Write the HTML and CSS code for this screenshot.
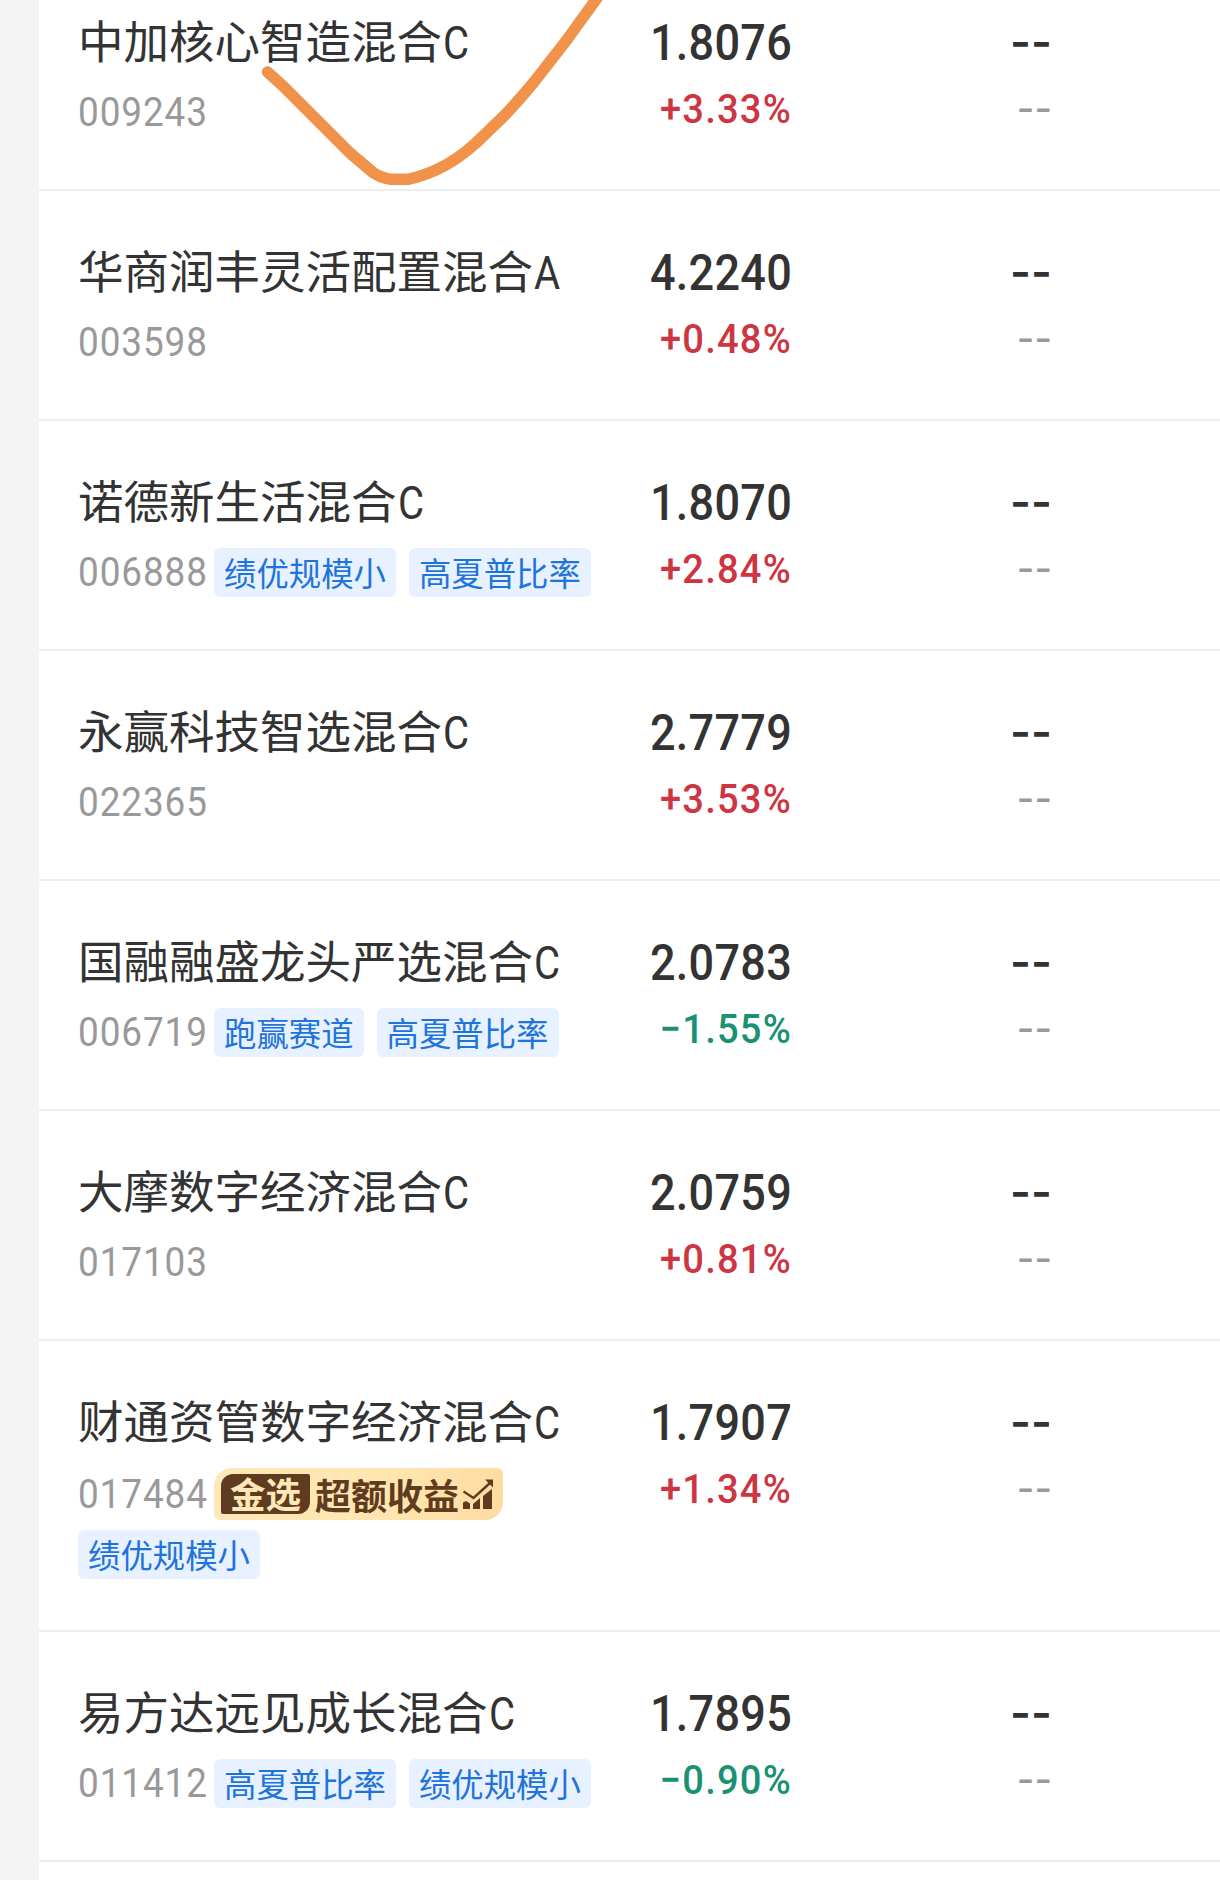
FILE: index.html
```html
<!DOCTYPE html>
<html lang="zh-CN">
<head>
<meta charset="UTF-8">
<meta name="viewport" content="width=device-width, initial-scale=1.0">
<title>基金自选</title>
<link rel="stylesheet" href="styles.css">
</head>
<body>
    <div class="fund-list">

        <div class="fund-row">
            <div class="fund-info">
                <h2>中加核心智造混合<span class="share">C</span></h2>
                <div class="fund-meta"><span class="code">009243</span></div>
            </div>
            <div class="value-col">
                <p class="net-value">1.8076</p>
                <p class="change up">+3.33%</p>
            </div>
            <div class="estimate-col">
                <p class="dash">--</p>
                <p class="dash small">--</p>
            </div>
        </div>

        <div class="fund-row">
            <div class="fund-info">
                <h2>华商润丰灵活配置混合<span class="share">A</span></h2>
                <div class="fund-meta"><span class="code">003598</span></div>
            </div>
            <div class="value-col">
                <p class="net-value">4.2240</p>
                <p class="change up">+0.48%</p>
            </div>
            <div class="estimate-col">
                <p class="dash">--</p>
                <p class="dash small">--</p>
            </div>
        </div>

        <div class="fund-row">
            <div class="fund-info">
                <h2>诺德新生活混合<span class="share">C</span></h2>
                <div class="fund-meta">
                    <span class="code">006888</span>
                    <span class="tag">绩优规模小</span>
                    <span class="tag">高夏普比率</span>
                </div>
            </div>
            <div class="value-col">
                <p class="net-value">1.8070</p>
                <p class="change up">+2.84%</p>
            </div>
            <div class="estimate-col">
                <p class="dash">--</p>
                <p class="dash small">--</p>
            </div>
        </div>

        <div class="fund-row">
            <div class="fund-info">
                <h2>永赢科技智选混合<span class="share">C</span></h2>
                <div class="fund-meta"><span class="code">022365</span></div>
            </div>
            <div class="value-col">
                <p class="net-value">2.7779</p>
                <p class="change up">+3.53%</p>
            </div>
            <div class="estimate-col">
                <p class="dash">--</p>
                <p class="dash small">--</p>
            </div>
        </div>

        <div class="fund-row">
            <div class="fund-info">
                <h2>国融融盛龙头严选混合<span class="share">C</span></h2>
                <div class="fund-meta">
                    <span class="code">006719</span>
                    <span class="tag">跑赢赛道</span>
                    <span class="tag">高夏普比率</span>
                </div>
            </div>
            <div class="value-col">
                <p class="net-value">2.0783</p>
                <p class="change down">−1.55%</p>
            </div>
            <div class="estimate-col">
                <p class="dash">--</p>
                <p class="dash small">--</p>
            </div>
        </div>

        <div class="fund-row">
            <div class="fund-info">
                <h2>大摩数字经济混合<span class="share">C</span></h2>
                <div class="fund-meta"><span class="code">017103</span></div>
            </div>
            <div class="value-col">
                <p class="net-value">2.0759</p>
                <p class="change up">+0.81%</p>
            </div>
            <div class="estimate-col">
                <p class="dash">--</p>
                <p class="dash small">--</p>
            </div>
        </div>

        <div class="fund-row tall">
            <div class="fund-info">
                <h2>财通资管数字经济混合<span class="share">C</span></h2>
                <div class="fund-meta">
                    <span class="code">017484</span>
                    <span class="gold-badge">
                        <span class="gold-label">金选</span>
                        <span class="gold-text">超额收益</span>
                        <svg class="gold-icon" width="31" height="31" viewBox="0 0 31 31">
                            <path d="M0 23.500l3-1.500 4 2.500V30H0zM10 25l7-6v11h-7zM20 17l9-7v20h-9z" fill="#5f3c20"/>
                            <path d="M0.500 12.500l10 6.500L27 4" fill="none" stroke="#5f3c20" stroke-width="2.400"/>
                            <path d="M22 0.500H30v8z" fill="#5f3c20"/>
                            <path d="M8.500 24v6M18.500 18v12" stroke="#ffe2ab" stroke-width="1.500"/>
                        </svg>
                    </span>
                </div>
                <div class="fund-meta second">
                    <span class="tag">绩优规模小</span>
                </div>
            </div>
            <div class="value-col">
                <p class="net-value">1.7907</p>
                <p class="change up">+1.34%</p>
            </div>
            <div class="estimate-col">
                <p class="dash">--</p>
                <p class="dash small">--</p>
            </div>
        </div>

        <div class="fund-row">
            <div class="fund-info">
                <h2>易方达远见成长混合<span class="share">C</span></h2>
                <div class="fund-meta">
                    <span class="code">011412</span>
                    <span class="tag">高夏普比率</span>
                    <span class="tag">绩优规模小</span>
                </div>
            </div>
            <div class="value-col">
                <p class="net-value">1.7895</p>
                <p class="change down">−0.90%</p>
            </div>
            <div class="estimate-col">
                <p class="dash">--</p>
                <p class="dash small">--</p>
            </div>
        </div>

    </div>

    <!-- hand-drawn mark over the first row -->
    <svg class="pen-mark" width="640" height="200" viewBox="0 0 640 200">
        <path d="M267.500 72L283 86L318 121L350 153L373 172.500Q381 178 391 179.300H408Q420 177 436 170Q456 161 476 143L506 114Q520 99 534 82L566 41L600 -6" fill="none" stroke="#f0924a" stroke-width="11.500" stroke-linecap="round" stroke-linejoin="round"/>
    </svg>
</body>
</html>
```

FILE: styles.css
```css
* {
    box-sizing: border-box;
}

body {
    font-family: Roboto, "Noto Sans CJK SC", sans-serif;
    margin: 0;
    background-color: #f4f4f4;
    height: 1880px;
    overflow: hidden;
}

h2, p {
    margin: 0;
    white-space: nowrap;
}

.fund-list {
    margin-left: 39px;
    margin-top: -39px;
    height: 1919px;
    background-color: #fff;
}

.fund-row {
    display: flex;
    height: 230px;
    padding-left: 39px;
    border-bottom: 2px solid #eee;
}

.fund-row.tall {
    height: 291px;
}

.fund-info {
    width: 540px;
    padding-top: 48px;
}

.fund-info h2 {
    height: 60px;
    font-family: "Noto Sans CJK SC", sans-serif;
    font-size: 45.5px;
    line-height: 60px;
    font-weight: 400;
    color: #333;
}

.share {
    display: inline-block;
    margin-left: 1px;
    font-family: Roboto, sans-serif;
    font-size: 46px;
    font-weight: 400;
    line-height: 60px;
    transform: scaleX(0.87);
    transform-origin: left;
}

.fund-meta {
    display: flex;
    align-items: center;
    height: 49px;
    margin-top: 19px;
}

.tall .fund-meta {
    height: 52px;
}

.tall .fund-meta.second {
    height: 49px;
    margin-top: 10px;
}

/* digits are squeezed a little to look like a DIN face */
.code {
    width: 136px;
    font-size: 41px;
    line-height: 49px;
    letter-spacing: 1px;
    color: #999;
    transform: scaleX(0.9);
    transform-origin: left;
}

.tag {
    height: 49px;
    padding: 0 10px;
    margin-right: 13px;
    border-radius: 6px;
    background-color: #e7f1ff;
    color: #1f74dc;
    font-family: "Noto Sans CJK SC", sans-serif;
    font-size: 32.4px;
    line-height: 48px;
    white-space: nowrap;
}

.value-col {
    width: 174px;
    padding-top: 52px;
    text-align: right;
}

.net-value {
    font-size: 50px;
    line-height: 60px;
    font-weight: 500;
    letter-spacing: 0.3px;
    color: #333;
    transform: scaleX(0.9);
    transform-origin: right;
}

.change {
    font-size: 41px;
    line-height: 50px;
    margin-top: 11px;
    font-weight: 500;
    letter-spacing: 1.3px;
    transform: scaleX(0.93);
    transform-origin: right;
}

.up {
    color: #cd3542;
}

.down {
    color: #1a9172;
}

.estimate-col {
    width: 260px;
    padding-top: 51px;
    text-align: right;
}

.dash {
    font-family: Inter, sans-serif;
    font-size: 45px;
    line-height: 60px;
    font-weight: 600;
    color: #333;
}

.dash.small {
    font-size: 38px;
    line-height: 50px;
    margin-top: 11px;
    font-weight: 500;
    color: #999;
}

.gold-badge {
    display: flex;
    align-items: center;
    width: 289px;
    height: 52px;
    padding-left: 7px;
    border-radius: 18px 6px 18px 6px;
    background: linear-gradient(100deg, #ffe8b8, #ffe6b0 60%, #ffdba0);
    font-family: "Noto Sans CJK SC", sans-serif;
    font-weight: 700;
    color: #5f3c20;
}

.gold-label {
    width: 89px;
    height: 40px;
    border-radius: 12px 2px 12px 2px;
    background-color: #5f3c20;
    color: #ffe8b8;
    font-size: 35.5px;
    line-height: 38px;
    text-align: center;
}

.gold-text {
    margin-left: 5px;
    font-size: 36px;
    line-height: 50px;
    font-weight: 700;
}

.gold-icon {
    margin-left: 4px;
}

.pen-mark {
    position: absolute;
    left: 0;
    top: 0;
}
```
